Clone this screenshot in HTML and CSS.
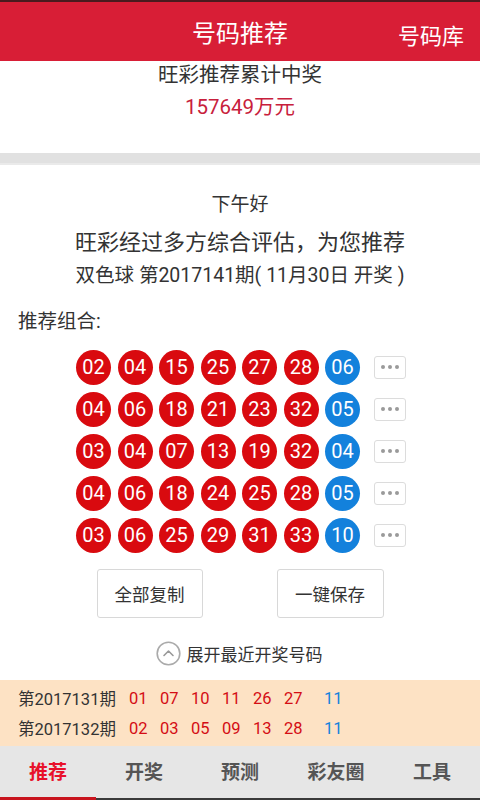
FILE: index.html
```html
<!DOCTYPE html>
<html lang="zh">
<head>
<meta charset="utf-8">
<link rel="stylesheet" href="styles.css">
</head>
<body>
<div class="app">
  <header class="topbar">
    <div class="title">号码推荐</div>
    <div class="lib">号码库</div>
  </header>
  <section class="summary">
    <div class="sum-label">旺彩推荐累计中奖</div>
    <div class="sum-value">157649万元</div>
  </section>
  <div class="divider"></div>
  <section class="rec">
    <div class="greet">下午好</div>
    <div class="headline">旺彩经过多方综合评估，为您推荐</div>
    <div class="issue">双色球 第2017141期( 11月30日 开奖 )</div>
    <div class="combo-label">推荐组合:</div>
    <div class="rows">
      <div class="row"><span class="ball">02</span><span class="ball">04</span><span class="ball">15</span><span class="ball">25</span><span class="ball">27</span><span class="ball">28</span><span class="ball blue">06</span><span class="more"><i></i><i></i><i></i></span></div>
      <div class="row"><span class="ball">04</span><span class="ball">06</span><span class="ball">18</span><span class="ball">21</span><span class="ball">23</span><span class="ball">32</span><span class="ball blue">05</span><span class="more"><i></i><i></i><i></i></span></div>
      <div class="row"><span class="ball">03</span><span class="ball">04</span><span class="ball">07</span><span class="ball">13</span><span class="ball">19</span><span class="ball">32</span><span class="ball blue">04</span><span class="more"><i></i><i></i><i></i></span></div>
      <div class="row"><span class="ball">04</span><span class="ball">06</span><span class="ball">18</span><span class="ball">24</span><span class="ball">25</span><span class="ball">28</span><span class="ball blue">05</span><span class="more"><i></i><i></i><i></i></span></div>
      <div class="row"><span class="ball">03</span><span class="ball">06</span><span class="ball">25</span><span class="ball">29</span><span class="ball">31</span><span class="ball">33</span><span class="ball blue">10</span><span class="more"><i></i><i></i><i></i></span></div>
    </div>
    <div class="actions">
      <div class="btn">全部复制</div>
      <div class="btn">一键保存</div>
    </div>
    <div class="expand">
      <svg class="up" width="25" height="25" viewBox="0 0 25 25"><circle cx="12.5" cy="12.5" r="11.3" fill="none" stroke="#aaa" stroke-width="1.6"/><path d="M8 14.5 L12.5 10 L17 14.5" fill="none" stroke="#999" stroke-width="1.6" stroke-linecap="round" stroke-linejoin="round"/></svg>
      <span>展开最近开奖号码</span>
    </div>
  </section>
  <section class="history">
    <div class="hrow"><span class="hissue">第2017131期</span><span class="hr">01</span><span class="hr">07</span><span class="hr">10</span><span class="hr">11</span><span class="hr">26</span><span class="hr">27</span><span class="hb">11</span></div>
    <div class="hrow"><span class="hissue">第2017132期</span><span class="hr">02</span><span class="hr">03</span><span class="hr">05</span><span class="hr">09</span><span class="hr">13</span><span class="hr">28</span><span class="hb">11</span></div>
  </section>
  <nav class="tabs">
    <div class="tab active">推荐</div>
    <div class="tab">开奖</div>
    <div class="tab">预测</div>
    <div class="tab">彩友圈</div>
    <div class="tab">工具</div>
  </nav>
</div>
</body>
</html>
```
FILE: styles.css
```css
html, body {
  margin: 0;
  padding: 0;
}
body {
  font-family: Roboto, "Noto Sans CJK SC", "Noto Sans", sans-serif;
  color: #333;
  background: #fff;
}
.app {
  width: 480px;
  height: 800px;
  display: flex;
  flex-direction: column;
  overflow: hidden;
}
.topbar {
  height: 59px;
  border-top: 2px solid #4a1a1e;
  background: #d81e36;
  color: #fff;
  display: flex;
  align-items: center;
  justify-content: center;
  position: relative;
}
.title {
  font-size: 24px;
}
.lib {
  position: absolute;
  right: 16px;
  top: 16px;
  font-size: 22px;
}
.summary {
  height: 92px;
  display: flex;
  flex-direction: column;
  align-items: center;
  box-sizing: border-box;
}
.sum-label {
  font-size: 20.5px;
  line-height: 28px;
  color: #333;
}
.sum-value {
  font-size: 20.5px;
  line-height: 28px;
  margin-top: 4px;
  color: #c8203c;
}
.divider {
  height: 10px;
  background: #e1e1e1;
  border-bottom: 2px solid #eaeaea;
}
.rec {
  display: flex;
  flex-direction: column;
  padding-top: 27px;
  height: 515px;
  box-sizing: border-box;
}
.greet {
  text-align: center;
  font-size: 19px;
  line-height: 26px;
}
.headline {
  text-align: center;
  font-size: 22px;
  line-height: 30px;
  margin-top: 10px;
}
.issue {
  text-align: center;
  font-size: 19.5px;
  line-height: 26px;
  margin-top: 5px;
}
.combo-label {
  font-size: 19.5px;
  line-height: 26px;
  margin-top: 20px;
  padding-left: 18px;
}
.rows {
  display: flex;
  flex-direction: column;
  gap: 7px;
  margin-top: 14.5px;
  padding-left: 76px;
}
.row {
  display: flex;
  align-items: center;
  gap: 6.5px;
}
.ball {
  width: 35px;
  height: 35px;
  border-radius: 50%;
  background: #d90a0f;
  color: #fff;
  font-size: 20px;
  display: flex;
  align-items: center;
  justify-content: center;
  font-family: Roboto, sans-serif;
}
.ball.blue {
  background: #1381dc;
}
.more {
  margin-left: 7px;
  width: 30px;
  height: 21px;
  border: 1px solid #dcdcdc;
  border-radius: 3px;
  display: flex;
  align-items: center;
  justify-content: center;
  gap: 3px;
}
.more i {
  width: 4px;
  height: 4px;
  border-radius: 50%;
  background: #9a9a9a;
}
.actions {
  display: flex;
  justify-content: center;
  gap: 74px;
  margin-top: 16.5px;
}
.btn {
  width: 104px;
  height: 47px;
  border: 1px solid #d8d8d8;
  border-radius: 3px;
  display: flex;
  align-items: center;
  justify-content: center;
  font-size: 17.5px;
  color: #333;
}
.actions .btn:last-child {
  width: 105px;
}
.expand {
  display: flex;
  align-items: center;
  justify-content: center;
  gap: 6px;
  margin-top: 22.5px;
  font-size: 17px;
  padding-right: 2px;
}
.history {
  background: #fde2c4;
  height: 66px;
  padding: 3px 0 0 18px;
  box-sizing: border-box;
  display: flex;
  flex-direction: column;
}
.hrow {
  display: flex;
  align-items: center;
  height: 30px;
  font-size: 16.5px;
}
.hissue {
  color: #333;
  width: 111px;
}
.hr {
  color: #d40d14;
  width: 31px;
}
.hb {
  color: #1381dc;
  margin-left: 9px;
}
.tabs {
  flex: 1;
  display: flex;
  background: #e6e6e6;
  border-bottom: 2px solid #3a3a3a;
}
.tab {
  flex: 1;
  display: flex;
  align-items: center;
  justify-content: center;
  font-size: 19px;
  font-weight: bold;
  color: #555;
  padding-bottom: 3px;
}
.tab.active {
  color: #e8102a;
  border-bottom: 3px solid #c8141e;
  margin-bottom: -2px;
}
```
